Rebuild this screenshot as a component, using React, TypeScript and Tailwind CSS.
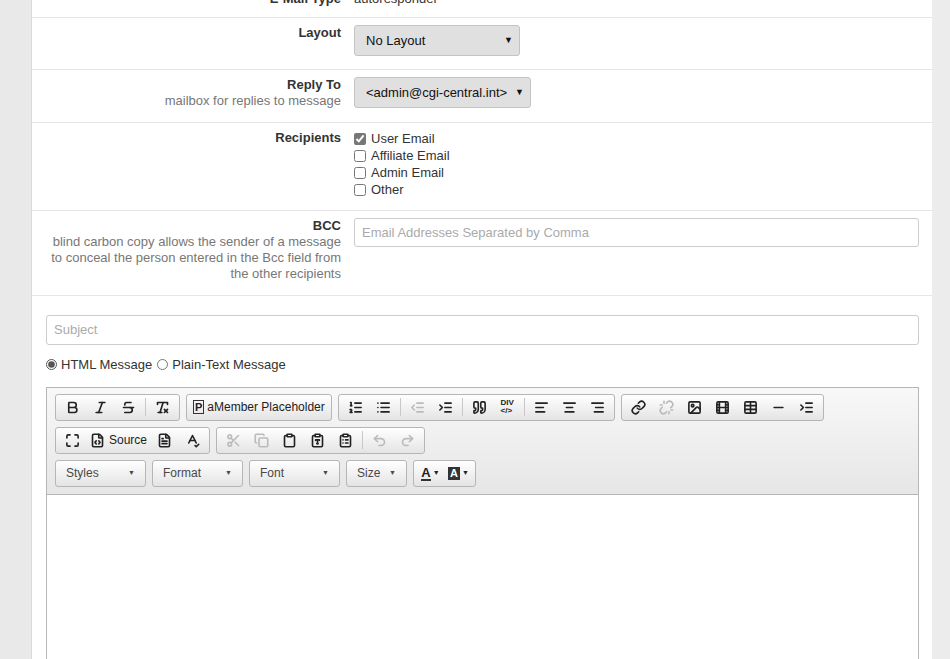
import {
  Bold, Italic, Strikethrough, RemoveFormatting, ListOrdered, List, IndentDecrease, IndentIncrease,
  Quote, AlignLeft, AlignCenter, AlignRight, Link, Unlink, Image, Film, Table, Minus, Maximize,
  FileCode, FileText, SpellCheck, Scissors, Copy, Clipboard, ClipboardType, ClipboardList, Undo2, Redo2,
} from "lucide-react";
import type { ReactNode } from "react";

function Row({ label, hint, children, className = "" }: { label: string; hint?: ReactNode; children: ReactNode; className?: string }) {
  return (
    <div className={`flex border-b border-[#e6e6e6] ${className}`}>
      <div className="w-[322px] shrink-0 pr-[13px] text-right leading-[16px]">
        <div className="font-bold text-[#333]">{label}</div>
        {hint && <div className="text-[#777]">{hint}</div>}
      </div>
      <div className="flex-1 pr-[13px]">{children}</div>
    </div>
  );
}

function Group({ children }: { children: ReactNode }) {
  return (
    <div className="flex h-[27px] items-center gap-[3px] rounded-[3px] border border-[#b6b6b6] bg-gradient-to-b from-white to-[#e4e4e4] px-[4px] text-[#333]">
      {children}
    </div>
  );
}

function Btn({ children, dim }: { children: ReactNode; dim?: boolean }) {
  return <div className={`flex h-[20px] min-w-[25px] items-center justify-center px-[2px] ${dim ? "text-[#bbb]" : "text-[#222]"}`}>{children}</div>;
}

const Sep = () => <div className="mx-[1px] h-[18px] w-px bg-[#c8c8c8]" />;

function Combo({ label, w }: { label: string; w: string }) {
  return (
    <div className={`flex h-[27px] ${w} items-center justify-between rounded-[3px] border border-[#b6b6b6] bg-gradient-to-b from-white to-[#e4e4e4] px-[10px] text-[12px] text-[#484848]`}>
      <span>{label}</span>
      <span className="text-[7px]">▼</span>
    </div>
  );
}

const s = { size: 15, strokeWidth: 2.6 };

export default function App() {
  return (
    <div className="flex h-[659px] overflow-hidden bg-[#ececec] text-[13px]" style={{ fontFamily: '"Liberation Sans", Arial, sans-serif' }}>
      <div className="w-[32px] shrink-0 border-r border-[#dadada] bg-[#e9e9e9]" />
      <div className="w-[900px] shrink-0 bg-white">
        <div className="-mt-[11px] flex h-[29px] border-b border-[#e6e6e6]">
          <div className="w-[322px] pr-[13px] text-right font-bold text-[#333]">E-Mail Type</div>
          <div className="text-[#333]">autoresponder</div>
        </div>
        <Row label="Layout" className="h-[52px] pt-[7px]">
          <div className="flex h-[31px] w-[166px] items-center justify-between rounded-[3px] border border-[#c4c4c4] bg-[#e0e0e0] pl-[11px] pr-[6px] text-[#111]">
            <span>No Layout</span><span className="text-[9px]">▼</span>
          </div>
        </Row>
        <Row label="Reply To" hint="mailbox for replies to message" className="h-[53px] pt-[7px]">
          <div className="flex h-[31px] w-[177px] items-center justify-between rounded-[3px] border border-[#c4c4c4] bg-[#e0e0e0] pl-[11px] pr-[6px] text-[#111]">
            <span>&lt;admin@cgi-central.int&gt;</span><span className="text-[9px]">▼</span>
          </div>
        </Row>
        <Row label="Recipients" className="h-[88px] pt-[7px]">
          {["User Email", "Affiliate Email", "Admin Email", "Other"].map((t, i) => (
            <label key={t} className="flex h-[17px] items-center gap-[5px] text-[#333]">
              <input type="checkbox" defaultChecked={i === 0} className="h-[12px] w-[12px] accent-[#777]" />
              {t}
            </label>
          ))}
        </Row>
        <Row
          label="BCC"
          hint={<>blind carbon copy allows the sender of a message<br />to conceal the person entered in the Bcc field from<br />the other recipients</>}
          className="h-[85px] pt-[7px]"
        >
          <div className="flex h-[29px] items-center rounded-[3px] border border-[#ccc] px-[7px] text-[#aaa]">Email Addresses Separated by Comma</div>
        </Row>
        <div className="pl-[14px] pr-[13px] pt-[19px]">
          <div className="flex h-[30px] items-center rounded-[3px] border border-[#ccc] px-[7px] text-[#aaa]">Subject</div>
          <div className="mt-[10px] flex items-center gap-[4px] text-[#333]">
            <input type="radio" defaultChecked className="h-[11px] w-[11px] accent-[#555]" /> HTML Message
            <input type="radio" className="ml-[1px] h-[11px] w-[11px]" /> Plain-Text Message
          </div>
          <div className="mt-[12px] h-[300px] border border-[#b6b6b6]">
            <div className="flex flex-col gap-[6px] border-b border-[#b6b6b6] bg-gradient-to-b from-[#f8f8f8] to-[#e6e6e6] px-[8px] pb-[7px] pt-[6px]">
              <div className="flex gap-[6px]">
                <Group><Btn><Bold {...s} /></Btn><Btn><Italic {...s} /></Btn><Btn><Strikethrough {...s} /></Btn><Sep /><Btn><RemoveFormatting {...s} /></Btn></Group>
                <Group><Btn><span className="border border-[#333] px-[1px] text-[11px] font-bold leading-[12px]">P</span><span className="ml-[3px] text-[12px]">aMember Placeholder</span></Btn></Group>
                <Group>
                  <Btn><ListOrdered {...s} /></Btn><Btn><List {...s} /></Btn><Sep />
                  <Btn dim><IndentDecrease {...s} /></Btn><Btn><IndentIncrease {...s} /></Btn><Sep />
                  <Btn><Quote {...s} /></Btn><Btn><span className="text-[8px] font-bold leading-[8px]">DIV<br />&lt;/&gt;</span></Btn><Sep />
                  <Btn><AlignLeft {...s} /></Btn><Btn><AlignCenter {...s} /></Btn><Btn><AlignRight {...s} /></Btn>
                </Group>
                <Group>
                  <Btn><Link {...s} /></Btn><Btn dim><Unlink {...s} /></Btn><Btn><Image {...s} /></Btn><Btn><Film {...s} /></Btn>
                  <Btn><Table {...s} /></Btn><Btn><Minus {...s} /></Btn><Btn><IndentIncrease {...s} /></Btn>
                </Group>
              </div>
              <div className="flex gap-[6px]">
                <Group>
                  <Btn><Maximize {...s} /></Btn><Btn><FileCode {...s} /><span className="ml-[4px] text-[12px]">Source</span></Btn>
                  <Btn><FileText {...s} /></Btn><Btn><SpellCheck {...s} /></Btn>
                </Group>
                <Group>
                  <Btn dim><Scissors {...s} /></Btn><Btn dim><Copy {...s} /></Btn><Btn><Clipboard {...s} /></Btn>
                  <Btn><ClipboardType {...s} /></Btn><Btn><ClipboardList {...s} /></Btn><Sep />
                  <Btn dim><Undo2 {...s} /></Btn><Btn dim><Redo2 {...s} /></Btn>
                </Group>
              </div>
              <div className="flex gap-[6px]">
                <Combo label="Styles" w="w-[91px]" />
                <Combo label="Format" w="w-[91px]" />
                <Combo label="Font" w="w-[91px]" />
                <Combo label="Size" w="w-[61px]" />
                <Group>
                  <Btn><span className="border-b-2 border-[#333] text-[13px] font-bold leading-[13px]">A</span><span className="ml-[2px] text-[7px]">▼</span></Btn>
                  <Btn><span className="bg-[#333] px-[2px] text-[11px] font-bold leading-[13px] text-white">A</span><span className="ml-[2px] text-[7px]">▼</span></Btn>
                </Group>
              </div>
            </div>
          </div>
        </div>
      </div>
    </div>
  );
}
